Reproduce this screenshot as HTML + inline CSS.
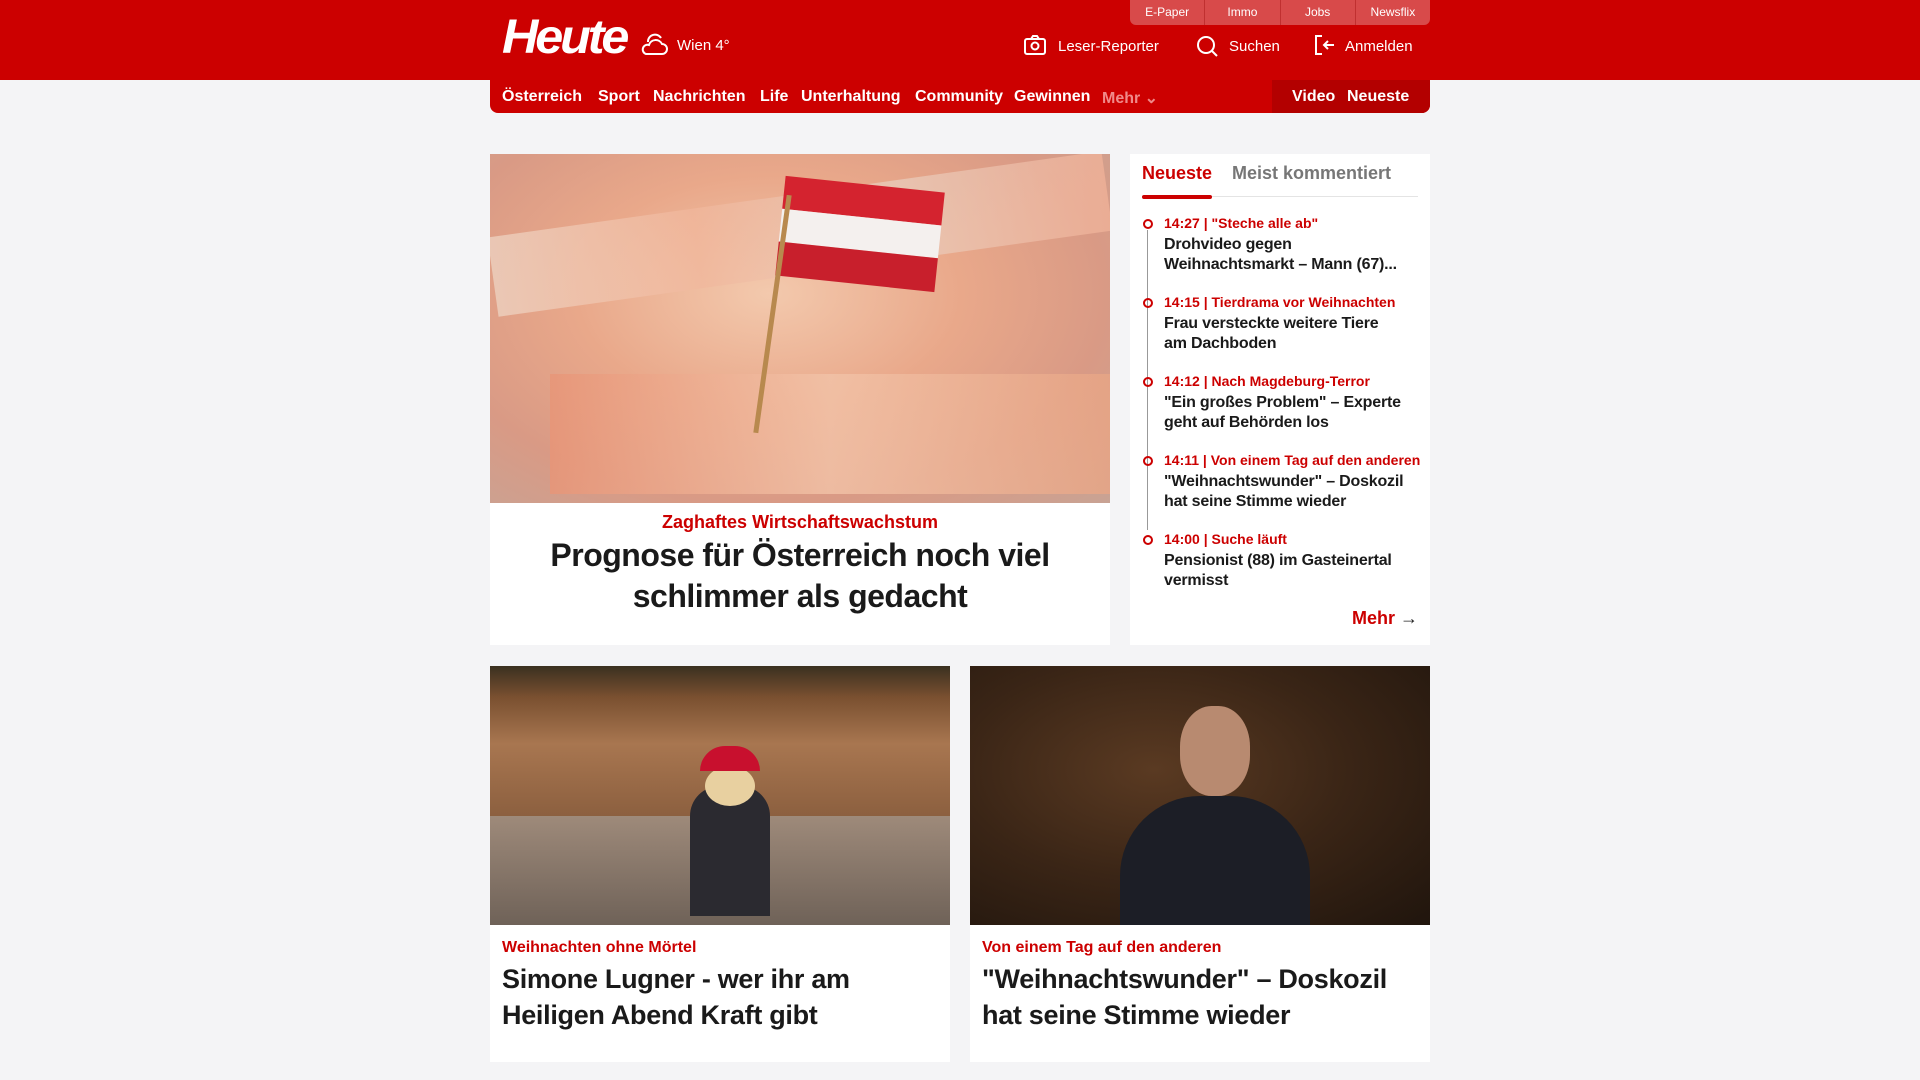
<!DOCTYPE html>
<html><head><meta charset="utf-8"><style>
*{margin:0;padding:0;box-sizing:border-box}
body{width:1920px;height:1080px;background:#f4f4f6;font-family:"Liberation Sans",sans-serif;position:relative;overflow:hidden;color:#1a1a1a}
.hdr{position:absolute;left:0;top:0;width:1920px;height:80px;background:#cc0000}
.abs{position:absolute}
.tabs{left:1130px;top:0;width:300px;height:25px;background:#d84a4a;border-radius:0 0 6px 6px;display:flex}
.tabs div{flex:1;color:#fff;font:12px "Liberation Sans Narrow","Liberation Sans",sans-serif;text-align:center;line-height:25px;border-left:1px solid #c03030}
.tabs div:first-child{border-left:none}
.logo{left:502px;top:10px;color:#fff;font:italic bold 48px "Liberation Sans Narrow","Liberation Sans",sans-serif;letter-spacing:-3px;transform:scaleX(1.05);transform-origin:left}
.w{color:#fff;font:15px "Liberation Sans Narrow","Liberation Sans",sans-serif}
.nav{left:490px;top:80px;width:940px;height:33px;background:#cc0000;border-radius:0 0 8px 8px}
.nav span{position:absolute;top:8px;color:#fff;font:bold 16px "Liberation Sans Narrow","Liberation Sans",sans-serif}
.card{background:#fff}
.kick{color:#cc0000;font-weight:bold}
.side .t{color:#cc0000;font:bold 14px "Liberation Sans Narrow","Liberation Sans",sans-serif}
.side .h{font:bold 16px/20px "Liberation Sans",sans-serif;color:#1a1a1a;letter-spacing:-.2px}
.dot{position:absolute;left:1143px;width:10px;height:10px;border:2px solid #cc0000;border-radius:50%}
</style></head><body>
<div class="hdr"></div>
<div class="abs tabs"><div>E-Paper</div><div>Immo</div><div>Jobs</div><div>Newsflix</div></div>
<div class="abs logo">Heute</div>
<svg class="abs" style="left:640px;top:28px" width="30" height="28" viewBox="0 0 30 28" fill="none" stroke="#fff" stroke-width="2"><path d="M8 14a7 7 0 0 1 13-4M6 26h16a5 5 0 0 0 0-10 7 7 0 0 0-13 1 4.5 4.5 0 0 0-3 9z"/></svg>
<div class="abs w" style="left:677px;top:37px">Wien 4°</div>
<svg class="abs" style="left:1024px;top:35px" width="22" height="20" viewBox="0 0 22 20" fill="none" stroke="#fff" stroke-width="2"><rect x="1" y="4" width="20" height="15" rx="2"/><path d="M7 4l2-3h4l2 3"/><circle cx="11" cy="11" r="3.5"/></svg>
<div class="abs w" style="left:1058px;top:38px">Leser-Reporter</div>
<svg class="abs" style="left:1196px;top:35px" width="22" height="22" viewBox="0 0 22 22" fill="none" stroke="#fff" stroke-width="2"><circle cx="10" cy="10" r="8"/><path d="M16 16l5 5"/></svg>
<div class="abs w" style="left:1229px;top:38px">Suchen</div>
<svg class="abs" style="left:1314px;top:35px" width="22" height="20" viewBox="0 0 22 20" fill="none" stroke="#fff" stroke-width="2"><path d="M8 1H2v18h6M20 10h-9M14 6l-4 4 4 4"/></svg>
<div class="abs w" style="left:1345px;top:38px">Anmelden</div>
<div class="abs nav">
<span style="left:12px">Österreich</span><span style="left:108px">Sport</span><span style="left:163px">Nachrichten</span><span style="left:270px">Life</span><span style="left:311px">Unterhaltung</span><span style="left:425px">Community</span><span style="left:524px">Gewinnen</span><span style="left:612px;color:#f08a8a">Mehr ⌄</span>
<div style="position:absolute;left:782px;top:0;width:158px;height:33px;background:#b30000;border-radius:0 0 8px 0"></div>
<span style="left:802px">Video</span><span style="left:857px">Neueste</span>
</div>

<div class="abs card" style="left:490px;top:154px;width:620px;height:491px"></div>
<div class="abs" style="left:490px;top:154px;width:620px;height:349px;background:radial-gradient(ellipse at 45% 40%,#f3c9ad,#e9a88a 40%,#d99a85 70%,#c8a394);overflow:hidden">
<div style="position:absolute;left:0;top:40px;width:620px;height:80px;background:linear-gradient(90deg,#efd8c8,#f1b79c,#e8cfc0,#f3b49a);opacity:.7;transform:rotate(-8deg)"></div>
<div style="position:absolute;left:60px;top:220px;width:560px;height:120px;background:linear-gradient(90deg,#e89577,#f2c3a8,#e8a585);opacity:.8"></div>
<div style="position:absolute;left:290px;top:30px;width:160px;height:100px;transform:rotate(6deg)"><div style="height:33px;background:#d4232f"></div><div style="height:33px;background:#f4f0ee"></div><div style="height:34px;background:#c81f2c"></div></div>
<div style="position:absolute;left:280px;top:40px;width:5px;height:240px;background:#b8894e;transform:rotate(8deg)"></div>
</div>
<div class="abs kick" style="left:490px;width:620px;text-align:center;top:512px;font-size:18px">Zaghaftes Wirtschaftswachstum</div>
<div class="abs" style="left:490px;width:620px;text-align:center;top:535px;font:bold 32px/41px 'Liberation Sans',sans-serif;letter-spacing:-.5px">Prognose für Österreich noch viel schlimmer als gedacht</div>

<div class="abs card side" style="left:1130px;top:154px;width:300px;height:491px">
<div style="position:absolute;left:12px;top:9px;color:#cc0000;font:bold 18px 'Liberation Sans',sans-serif">Neueste</div>
<div style="position:absolute;left:102px;top:9px;color:#777;font:bold 18px 'Liberation Sans',sans-serif">Meist kommentiert</div>
<div style="position:absolute;left:12px;top:42px;width:276px;height:1px;background:#e4e4e4"></div>
<div style="position:absolute;left:12px;top:41px;width:70px;height:4px;background:#cc0000;border-radius:2px"></div>
<div style="position:absolute;left:17px;top:76px;width:1px;height:300px;background:#999"></div>
</div>
<div class="side">
<div class="dot" style="top:219px"></div><div class="abs t" style="left:1164px;top:215px">14:27 | "Steche alle ab"</div><div class="abs h" style="left:1164px;top:235px">Drohvideo gegen<br>Weihnachtsmarkt – Mann (67)...</div>
<div class="dot" style="top:298px"></div><div class="abs t" style="left:1164px;top:294px">14:15 | Tierdrama vor Weihnachten</div><div class="abs h" style="left:1164px;top:314px">Frau versteckte weitere Tiere<br>am Dachboden</div>
<div class="dot" style="top:377px"></div><div class="abs t" style="left:1164px;top:373px">14:12 | Nach Magdeburg-Terror</div><div class="abs h" style="left:1164px;top:393px">"Ein großes Problem" – Experte<br>geht auf Behörden los</div>
<div class="dot" style="top:456px"></div><div class="abs t" style="left:1164px;top:452px">14:11 | Von einem Tag auf den anderen</div><div class="abs h" style="left:1164px;top:472px">"Weihnachtswunder" – Doskozil<br>hat seine Stimme wieder</div>
<div class="dot" style="top:535px"></div><div class="abs t" style="left:1164px;top:531px">14:00 | Suche läuft</div><div class="abs h" style="left:1164px;top:551px">Pensionist (88) im Gasteinertal<br>vermisst</div>
<div class="abs" style="left:1352px;top:608px;color:#cc0000;font:bold 18px 'Liberation Sans',sans-serif">Mehr <span style="color:#222">→</span></div>
</div>

<div class="abs card" style="left:490px;top:666px;width:460px;height:396px"></div>
<div class="abs" style="left:490px;top:666px;width:460px;height:259px;background:linear-gradient(180deg,#3a3020 0,#7a5030 12%,#a87650 30%,#8a5e3e 60%,#6a4a36 100%);overflow:hidden">
<div style="position:absolute;left:0;top:150px;width:460px;height:109px;background:linear-gradient(180deg,#9e8a7a,#6f6258)"></div>
<div style="position:absolute;left:200px;top:120px;width:80px;height:130px;background:#2b2a30;border-radius:30px 30px 0 0"></div>
<div style="position:absolute;left:215px;top:100px;width:50px;height:40px;background:#e8d0a0;border-radius:50%"></div>
<div style="position:absolute;left:210px;top:80px;width:60px;height:25px;background:#c8102e;border-radius:30px 30px 0 0"></div>
</div>
<div class="abs kick" style="left:502px;top:939px;font-size:16px">Weihnachten ohne Mörtel</div>
<div class="abs" style="left:502px;top:961px;font:bold 27px/36px 'Liberation Sans',sans-serif;letter-spacing:-.3px">Simone Lugner - wer ihr am<br>Heiligen Abend Kraft gibt</div>

<div class="abs card" style="left:970px;top:666px;width:460px;height:396px"></div>
<div class="abs" style="left:970px;top:666px;width:460px;height:259px;background:radial-gradient(ellipse at 40% 40%,#5a3a22,#3a2516 50%,#20150d);overflow:hidden">
<div style="position:absolute;left:150px;top:130px;width:190px;height:140px;background:#1c1e26;border-radius:80px 80px 0 0"></div>
<div style="position:absolute;left:210px;top:40px;width:70px;height:90px;background:#b88a70;border-radius:45%"></div>
</div>
<div class="abs kick" style="left:982px;top:939px;font-size:16px">Von einem Tag auf den anderen</div>
<div class="abs" style="left:982px;top:961px;font:bold 27px/36px 'Liberation Sans',sans-serif;letter-spacing:-.3px">"Weihnachtswunder" – Doskozil<br>hat seine Stimme wieder</div>
</body></html>
